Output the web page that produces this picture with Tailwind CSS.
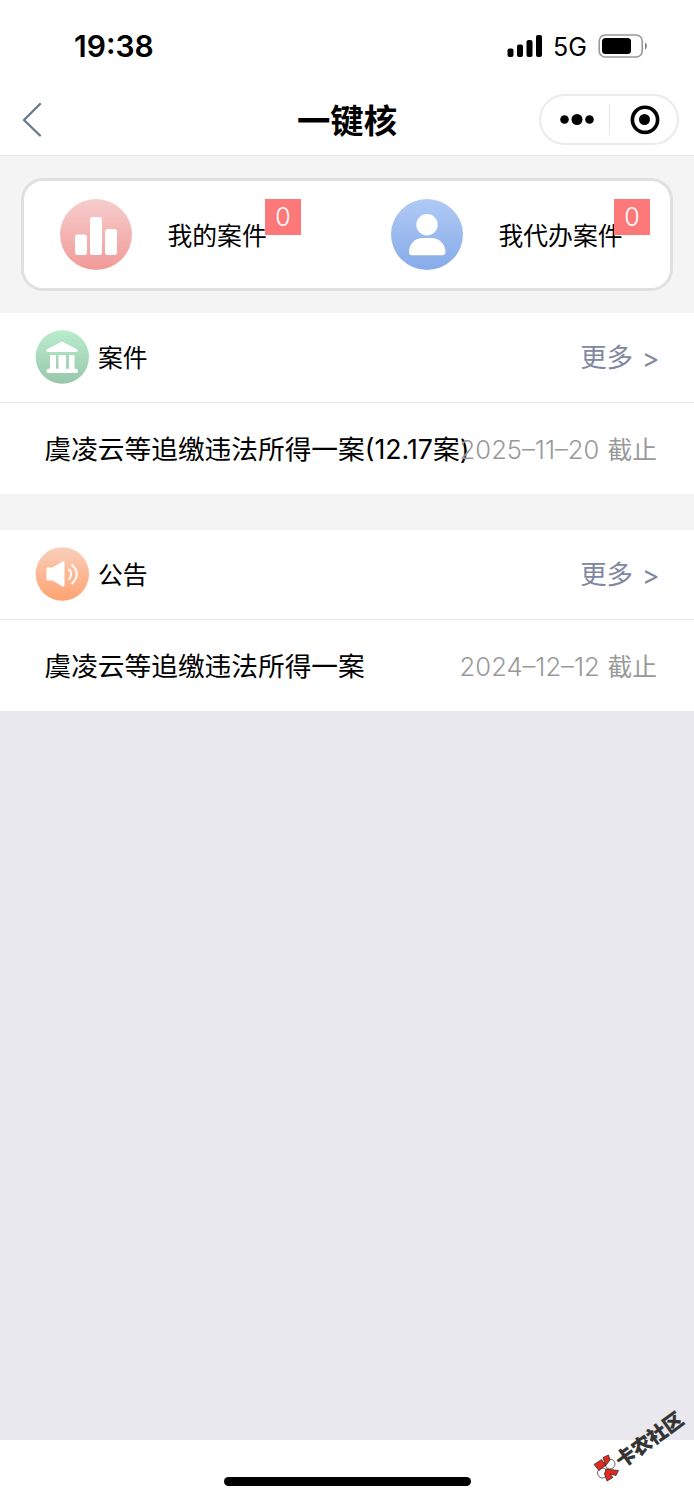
<!DOCTYPE html>
<html lang="zh-CN">
<head>
<meta charset="utf-8">
<title>一键核</title>
<script src="https://cdn.jsdelivr.net/npm/@tailwindcss/browser@4"></script>
</head>
<body class="w-[694px] bg-white text-black font-['Inter','Noto_Sans_CJK_SC',sans-serif]">
<div class="relative flex h-[1500px] w-[694px] flex-col overflow-hidden">
  <!-- status bar -->
  <div class="flex h-[92px] shrink-0 items-center justify-between pl-[74px] pr-[46px]">
    <div class="text-[30px] leading-9 font-semibold">19:38</div>
    <div class="flex items-center">
      <svg width="36" height="24" viewBox="0 0 36 24"><rect x="0.500" y="14.500" width="6" height="8.500" rx="2"/><rect x="10" y="10.500" width="6" height="12.500" rx="2"/><rect x="19.500" y="6" width="6" height="17" rx="2"/><rect x="29" y="1" width="6" height="22" rx="2"/></svg>
      <span class="ml-[10px] w-[45px] whitespace-nowrap pt-[2px] text-[25px] leading-9">5G</span>
      <svg width="50" height="24" viewBox="0 0 50 24"><rect x="1.200" y="1" width="43" height="22" rx="6" fill="none" stroke="#999" stroke-width="1.600"/><rect x="4" y="4" width="29" height="16" rx="3.500"/><path d="M47 8.500c2.600 1 2.600 6 0 7z" fill="#888"/></svg>
    </div>
  </div>
  <!-- navigation bar -->
  <div class="grid h-16 shrink-0 grid-cols-[1fr_auto_1fr] items-center border-b border-[#e5e5eb] pr-[21px] pb-2 pl-[21px]">
    <svg class="mb-[2px]" width="22" height="36" viewBox="0 0 22 36" fill="none" stroke="#627a8e" stroke-width="2.300" stroke-linecap="round" stroke-linejoin="round"><path d="M19 3 3 19 19 34.500"/></svg>
    <div class="pt-[2px] text-[33.400px] leading-10 font-bold">一键核</div>
    <div class="-mr-[6px] flex h-[51px] w-[140px] items-center justify-self-end rounded-full border-2 border-[#ebebeb]">
      <svg width="136" height="47" viewBox="0 0 136 47"><circle cx="23.500" cy="23.500" r="4.300"/><circle cx="36" cy="23.500" r="5.500"/><circle cx="48.500" cy="23.500" r="4.300"/><path d="M68.500 8v31" stroke="#e8e8e8" stroke-width="1.300"/><circle cx="104" cy="23.800" r="12.600" fill="none" stroke="#000" stroke-width="3.600"/><circle cx="103.500" cy="23.500" r="5.500"/></svg>
    </div>
  </div>
  <!-- shortcuts -->
  <div class="h-[157px] shrink-0 bg-[#f4f4f4] px-[21px] pt-[22px]">
    <div class="flex h-[113px] w-[652px] rounded-[22px] border-[3px] border-[#e0e0e0] bg-white pt-[18px] pl-9">
      <div class="relative flex h-[71px] w-[331px] items-center">
        <svg class="shrink-0" width="72" height="71" viewBox="0 0 72 71"><defs><linearGradient id="r" x2="0" y2="1"><stop stop-color="#f7cdcd"/><stop offset="1" stop-color="#f09a97"/></linearGradient></defs><ellipse cx="36" cy="35.500" rx="36" ry="35.500" fill="url(#r)"/><g fill="#fff"><rect x="15" y="35.500" width="12" height="20.500" rx="2.500"/><rect x="30" y="18" width="12" height="38" rx="2.500"/><rect x="45" y="30" width="12" height="26" rx="2.500"/></g></svg>
        <span class="ml-[35.500px] pt-[2px] text-[24.800px] leading-9">我的案件</span>
        <span class="absolute top-0 left-[205px] flex h-9 w-9 items-center justify-center bg-[#fd7979] pt-px text-[25px] leading-none font-light text-white">0</span>
      </div>
      <div class="relative flex h-[71px] w-[270px] items-center">
        <svg class="shrink-0" width="72" height="71" viewBox="0 0 72 71"><defs><linearGradient id="b" x2="0" y2="1"><stop stop-color="#b0caf4"/><stop offset="1" stop-color="#86abe9"/></linearGradient></defs><ellipse cx="36" cy="35.500" rx="36" ry="35.500" fill="url(#b)"/><circle cx="36" cy="25.700" r="10.700" fill="#fff"/><path d="M18 53C18 45 24 39 32 39h8c8 0 14.500 6 14.500 14 0 2.500-1.500 3.300-4 3.300h-29c-2.500 0-3.500-.8-3.500-3.300z" fill="#fff"/></svg>
        <span class="ml-[35.500px] whitespace-nowrap pt-[2px] text-[24.800px] leading-9">我代办案件</span>
        <span class="absolute top-0 left-[223px] flex h-9 w-9 items-center justify-center bg-[#fd7979] pt-px text-[25px] leading-none font-light text-white">0</span>
      </div>
    </div>
  </div>
  <!-- cases -->
  <section class="h-[181px] shrink-0">
    <div class="flex h-[90px] items-center border-b border-[#ebebeb] pr-9 pl-[35px]">
      <svg class="mb-px" width="54" height="54" viewBox="0 0 54 54"><defs><linearGradient id="g" x2="0" y2="1"><stop stop-color="#b9edcc"/><stop offset="1" stop-color="#98c7ab"/></linearGradient></defs><circle cx="27.300" cy="27" r="26.700" fill="url(#g)"/><g fill="#fff"><path d="M27 11.500 41.500 19c1.500.8 1.500 3-.5 3H13c-2 0-2-2.200-.5-3z"/><rect x="15" y="25" width="6" height="15" rx="1"/><rect x="23.500" y="25" width="7.500" height="15" rx="1"/><rect x="34" y="25" width="5.500" height="15" rx="1"/><rect x="11.500" y="38.800" width="31.500" height="4.200" rx="2"/></g></svg>
      <span class="ml-[9px] flex-1 text-[24.800px] leading-9">案件</span>
      <span class="flex gap-[9px] text-[26.400px] leading-9 text-[#8087a0]"><span>更多</span><span class="w-[16px] pt-px">&gt;</span></span>
    </div>
    <div class="relative flex h-[91px] items-center pl-[44.500px]">
      <span class="whitespace-nowrap pt-px text-[26.700px] leading-9">虞凌云等追缴违法所得一案<span>(12.17</span>案)</span>
      <span class="absolute right-[37px] flex gap-[8px] whitespace-nowrap pt-[2px] text-[24.700px] leading-9 text-[#999]"><span class="w-[140px] text-[25.600px] font-light">2025–11–20</span><span>截止</span></span>
    </div>
  </section>
  <div class="h-9 shrink-0 bg-[#f4f4f4]"></div>
  <!-- announcements -->
  <section class="h-[181px] shrink-0">
    <div class="flex h-[90px] items-center border-b border-[#ebebeb] pr-9 pl-[35px]">
      <svg class="mb-px" width="54" height="54" viewBox="0 0 54 54"><defs><linearGradient id="o" x2="0" y2="1"><stop stop-color="#f8cfbb"/><stop offset="1" stop-color="#ffa270"/></linearGradient></defs><circle cx="27.300" cy="27" r="26.700" fill="url(#o)"/><path d="M11.500 21.500q0-1 1-1h5L27.500 14.500q2-1 2 1v23q0 2-2 1L17.500 33.500h-5q-1 0-1-1z" fill="#fff"/><path d="M33.500 22q5.500 5 0 10.500M36.500 17.500q10.500 9.500 0 19.500" fill="none" stroke="#fff" stroke-width="2"/></svg>
      <span class="ml-[9px] flex-1 text-[24.800px] leading-9">公告</span>
      <span class="flex gap-[9px] text-[26.400px] leading-9 text-[#8087a0]"><span>更多</span><span class="w-[16px] pt-px">&gt;</span></span>
    </div>
    <div class="relative flex h-[91px] items-center pl-[44.500px]">
      <span class="whitespace-nowrap pt-px text-[26.700px] leading-9">虞凌云等追缴违法所得一案</span>
      <span class="absolute right-[37px] flex gap-[8px] whitespace-nowrap pt-[2px] text-[24.700px] leading-9 text-[#999]"><span class="w-[140px] text-[25.600px] font-light">2024–12–12</span><span>截止</span></span>
    </div>
  </section>
  <div class="h-[729px] shrink-0 bg-[#e8e8ee]"></div>
  <div class="flex flex-1 justify-center pt-[37px]"><div class="h-[9px] w-[247px] rounded-full bg-black"></div></div>
  <!-- community watermark -->
  <svg class="absolute right-0 bottom-0" width="124" height="105" viewBox="0 0 124 105">
    <g stroke="#222" stroke-width=".7"><circle cx="40" cy="69" r="5" fill="#fff"/><circle cx="32.500" cy="78" r="5" fill="#fff"/><path d="M24 69.500 31.500 64.500 35.500 70.500 29 75.500zM33 62.500 38.500 60 40 65 35.500 71zM36 74 48.500 75.500 46 80.500 40 79 43 82.500 37 86 34.500 79 36 74z" fill="#e02b22"/></g>
    <text transform="translate(52 73.500) rotate(-36)" font-size="19.500" font-weight="900" fill="#333" stroke="#333" stroke-width=".3" font-family="'Noto Sans CJK SC',sans-serif">卡农社区</text>
  </svg>
</div>
</body>
</html>
